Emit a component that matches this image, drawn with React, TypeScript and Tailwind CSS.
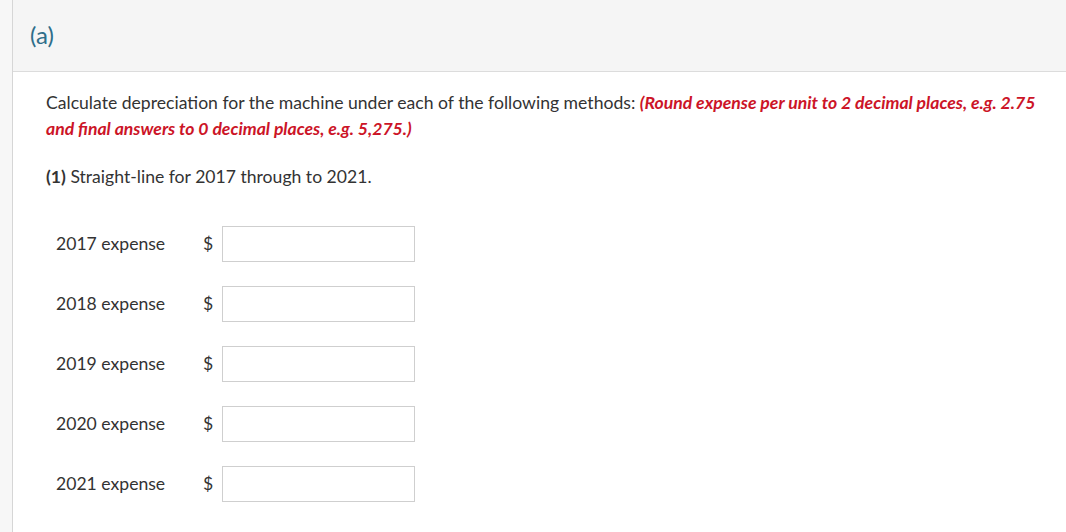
const rows = ["2017", "2018", "2019", "2020", "2021"];

export default function App() {
  return (
    <div
      className="flex h-[532px] w-[1066px] overflow-hidden bg-white text-[#333333]"
      style={{ fontFamily: "Lato, 'Open Sans', sans-serif" }}
    >
      {/* left gutter */}
      <div className="w-[13px] shrink-0 border-r border-[#d6d6d6] bg-[#f7f7f7]" />

      <div className="flex min-w-0 flex-1 flex-col">
        {/* part header */}
        <div className="flex h-[72px] shrink-0 items-center border-b border-[#dcdcdc] bg-[#f5f5f5] pl-[17px] pb-[2px]">
          <span className="text-[24px] text-[#2e6e8a]">(a)</span>
        </div>

        {/* body */}
        <div className="pl-[33px] pr-[20px] pt-[18px] text-[17.6px] leading-[26px]">
          <p>
            Calculate depreciation for the machine under each of the following methods:{" "}
            <span className="font-bold italic text-[#cc1427]">
              (Round expense per unit to 2 decimal places, e.g. 2.75 and final answers to 0 decimal places, e.g. 5,275.)
            </span>
          </p>

          <p className="mt-[22px]">
            <span className="font-bold">(1)</span> Straight-line for 2017 through to 2021.
          </p>

          <div className="mt-[36px] flex flex-col gap-[24px] pl-[10px]">
            {rows.map((y) => (
              <div key={y} className="flex h-[36px] items-center">
                <span className="w-[147px]">{y} expense</span>
                <span className="w-[19px]">$</span>
                <input
                  className="h-[36px] w-[193px] border border-[#cfcfcf] bg-white outline-none"
                  type="text"
                />
              </div>
            ))}
          </div>
        </div>
      </div>
    </div>
  );
}
